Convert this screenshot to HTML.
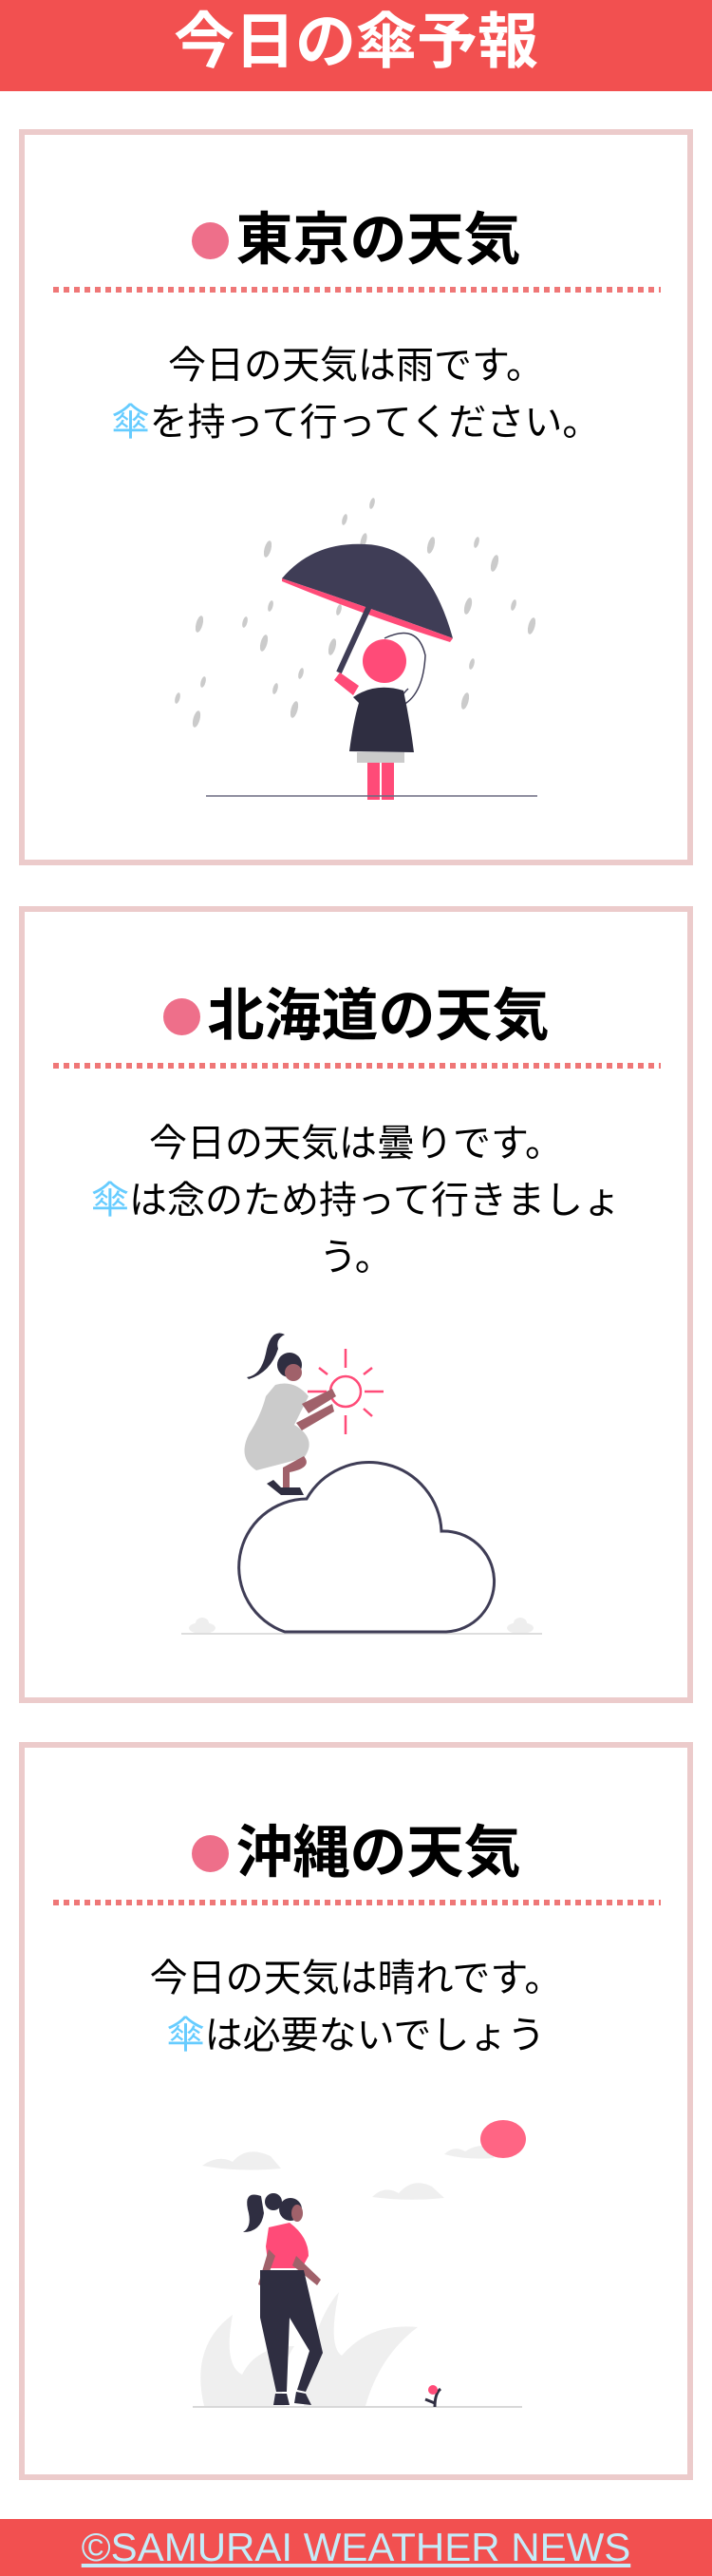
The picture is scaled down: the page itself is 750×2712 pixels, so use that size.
<!DOCTYPE html>
<html><head><meta charset="utf-8"><style>
*{margin:0;padding:0;box-sizing:border-box}
body{width:750px;height:2712px;position:relative;background:#fff;font-family:"Liberation Sans","Noto Sans CJK JP",sans-serif;overflow:hidden}
.hdr{position:absolute;left:0;top:0;width:750px;height:96px;background:#f25050;color:#fff;font-weight:bold;font-size:64px;line-height:88px;text-align:center}
.card{position:absolute;left:20px;width:710px;border:6px solid #eccbcb}
.title{position:absolute;left:0;width:750px;height:70px;line-height:70px;text-align:center;font-weight:bold;font-size:60px;color:#000;white-space:nowrap}
.dot{display:inline-block;width:39px;height:39px;border-radius:50%;background:#ee6f8a;vertical-align:middle;margin-right:8px;position:relative;top:-4px}
.line{position:absolute;left:56px;width:640px;height:6px;background:repeating-linear-gradient(90deg,#ef7777 0 6px,transparent 6px 11px)}
.txt{position:absolute;left:0;width:750px;text-align:center;font-size:40px;line-height:60px;color:#000;white-space:nowrap}
.u{color:#66ccff}
.ftr{position:absolute;left:0;top:2652px;width:750px;height:60px;background:#f25050;text-align:center;font-size:42px;line-height:60px;color:#c4ecf9;text-decoration:underline}
svg{position:absolute;left:0;top:0}
</style></head><body>
<div class="hdr">今日の傘予報</div>

<div class="card" style="top:136px;height:775px"></div>
<div class="title" style="top:218px"><span class="dot"></span>東京の天気</div>
<div class="line" style="top:302px"></div>
<div class="txt" style="top:355px">今日の天気は雨です。<br><span class="u">傘</span>を持って行ってください。</div>

<div class="card" style="top:954px;height:839px"></div>
<div class="title" style="top:1035px"><span class="dot"></span>北海道の天気</div>
<div class="line" style="top:1119px"></div>
<div class="txt" style="top:1174px">今日の天気は曇りです。<br><span class="u">傘</span>は念のため持って行きましょ<br>う。</div>

<div class="card" style="top:1834px;height:777px"></div>
<div class="title" style="top:1916px"><span class="dot"></span>沖縄の天気</div>
<div class="line" style="top:2000px"></div>
<div class="txt" style="top:2053px">今日の天気は晴れです。<br><span class="u">傘</span>は必要ないでしょう</div>

<div class="ftr">©SAMURAI WEATHER NEWS</div>

<svg width="750" height="2712" viewBox="0 0 750 2712">
<g fill="#cbcbcb">
<ellipse cx="282" cy="578" rx="3.5" ry="9" transform="rotate(15 282 578)"/>
<ellipse cx="363" cy="547" rx="2.5" ry="6" transform="rotate(15 363 547)"/>
<ellipse cx="392" cy="530" rx="2.5" ry="6" transform="rotate(15 392 530)"/>
<ellipse cx="383" cy="569" rx="3" ry="8" transform="rotate(15 383 569)"/>
<ellipse cx="454" cy="574" rx="3.5" ry="9" transform="rotate(15 454 574)"/>
<ellipse cx="502" cy="571" rx="2.5" ry="6" transform="rotate(15 502 571)"/>
<ellipse cx="521" cy="593" rx="3.5" ry="9" transform="rotate(15 521 593)"/>
<ellipse cx="493" cy="638" rx="3.5" ry="9" transform="rotate(15 493 638)"/>
<ellipse cx="541" cy="637" rx="2.5" ry="6" transform="rotate(15 541 637)"/>
<ellipse cx="560" cy="659" rx="3.5" ry="9" transform="rotate(15 560 659)"/>
<ellipse cx="210" cy="657" rx="3.5" ry="9" transform="rotate(15 210 657)"/>
<ellipse cx="258" cy="655" rx="2.5" ry="6" transform="rotate(15 258 655)"/>
<ellipse cx="285" cy="638" rx="2.5" ry="6" transform="rotate(15 285 638)"/>
<ellipse cx="357" cy="642" rx="2.5" ry="6" transform="rotate(15 357 642)"/>
<ellipse cx="278" cy="677" rx="3.5" ry="9" transform="rotate(15 278 677)"/>
<ellipse cx="350" cy="681" rx="3.5" ry="9" transform="rotate(15 350 681)"/>
<ellipse cx="497" cy="699" rx="2.5" ry="6" transform="rotate(15 497 699)"/>
<ellipse cx="214" cy="718" rx="2.5" ry="6" transform="rotate(15 214 718)"/>
<ellipse cx="187" cy="735" rx="2.5" ry="6" transform="rotate(15 187 735)"/>
<ellipse cx="317" cy="709" rx="2.5" ry="6" transform="rotate(15 317 709)"/>
<ellipse cx="290" cy="725" rx="2.5" ry="6" transform="rotate(15 290 725)"/>
<ellipse cx="310" cy="747" rx="3.5" ry="9" transform="rotate(15 310 747)"/>
<ellipse cx="207" cy="757" rx="3.5" ry="9" transform="rotate(15 207 757)"/>
<ellipse cx="490" cy="738" rx="3.5" ry="9" transform="rotate(15 490 738)"/>
</g>
<path d="M297 609 Q330 570 385 573 Q450 575 477 672 Q390 640 297 609Z" fill="#3f3d56"/>
<path d="M297 609 Q390 640 477 672 L474 676 Q390 650 297 612Z" fill="#ff4b78"/>
<line x1="390" y1="636" x2="357" y2="708" stroke="#3f3d56" stroke-width="6"/>
<path d="M358 708 L352 716 L372 732 L378 722Z" fill="#ff4b78"/>
<path d="M405 672 Q440 655 448 690 Q446 730 425 742 Q418 736 430 725" fill="none" stroke="#3f3d56" stroke-width="1.5"/>
<circle cx="405" cy="696" r="23" fill="#ff4b78"/>
<path d="M372 734 Q395 718 425 727 Q432 760 436 792 L368 791 Q372 760 378 740Z" fill="#2f2e41"/>
<rect x="376" y="792" width="50" height="11" fill="#cbcbcb"/>
<rect x="387" y="803" width="13" height="39" fill="#ff4b78"/>
<rect x="402" y="803" width="13" height="39" fill="#ff4b78"/>
<line x1="217" y1="838" x2="566" y2="838" stroke="#6c6a80" stroke-width="1.5"/>

<g fill="#eeeeee"><ellipse cx="213" cy="1714" rx="14" ry="6"/><ellipse cx="213" cy="1709" rx="7" ry="6"/><ellipse cx="548" cy="1714" rx="14" ry="6"/><ellipse cx="548" cy="1709" rx="7" ry="6"/></g>
<line x1="191" y1="1720" x2="571" y2="1720" stroke="#dddddd" stroke-width="2"/>
<path d="M300 1718 H470 A48 48 0 0 0 465 1612 A76 76 0 0 0 323 1578 A72 72 0 0 0 300 1718Z" fill="#fff" stroke="#3f3d56" stroke-width="3"/>
<g stroke="#ff4b78" stroke-width="2.5" fill="none">
<circle cx="364" cy="1465" r="16"/>
<line x1="364" y1="1420" x2="364" y2="1440"/><line x1="364" y1="1490" x2="364" y2="1510"/>
<line x1="324" y1="1465" x2="344" y2="1465"/><line x1="384" y1="1465" x2="404" y2="1465"/>
<line x1="336" y1="1440" x2="345" y2="1447"/><line x1="392" y1="1440" x2="383" y2="1447"/>
<line x1="383" y1="1483" x2="392" y2="1491"/>
</g>
<path d="M260 1450 Q275 1448 280 1425 Q285 1398 300 1405 Q290 1410 293 1420 Q285 1445 262 1452Z" fill="#2f2e41"/>
<circle cx="305" cy="1437" r="13" fill="#2f2e41"/>
<circle cx="309" cy="1445" r="9" fill="#a0616a"/>
<path d="M290 1458 Q310 1452 325 1470 L310 1500 Q335 1515 320 1535 L270 1548 Q250 1535 262 1510 Q275 1490 280 1470Z" fill="#cbcbcb"/>
<path d="M318 1478 L350 1462 L354 1470 L325 1488Z M312 1498 L350 1478 L352 1486 L318 1506Z" fill="#a0616a"/>
<path d="M320 1533 Q330 1545 305 1550 L305 1570 L298 1570 L298 1545Z" fill="#a0616a"/>
<path d="M281 1562 L296 1574 L320 1574 L316 1566 L296 1566 L288 1558Z" fill="#2f2e41"/>

<g fill="#efefef">
<path d="M213 2280 Q230 2268 245 2276 Q260 2258 285 2270 L296 2283 Q250 2287 213 2280Z"/>
<path d="M392 2313 Q405 2300 420 2309 Q435 2292 455 2302 L468 2314 Q430 2318 392 2313Z"/>
<path d="M468 2268 Q478 2258 490 2265 Q505 2255 520 2262 L520 2272 Q490 2274 468 2268Z"/>
<path d="M215 2533 Q200 2470 245 2437 Q235 2490 255 2500 Q270 2470 310 2470 Q290 2500 300 2533Z"/>
<path d="M320 2533 Q325 2450 357 2413 Q345 2470 360 2480 Q390 2445 440 2450 Q400 2480 385 2533Z"/>
</g>
<ellipse cx="530" cy="2252" rx="24" ry="20" fill="#ff6584"/>
<line x1="203" y1="2534" x2="550" y2="2534" stroke="#cccccc" stroke-width="1.5"/>
<path d="M458 2534 Q458 2520 464 2515 M458 2530 L448 2526" stroke="#2f2e41" stroke-width="3" fill="none"/>
<circle cx="456" cy="2516" r="5" fill="#ff4b78"/>
<path d="M275 2312 Q255 2305 262 2330 Q265 2345 256 2350 Q275 2350 278 2330Z" fill="#2f2e41"/>
<circle cx="288" cy="2318" r="9" fill="#2f2e41"/>
<circle cx="306" cy="2326" r="12" fill="#2f2e41"/>
<ellipse cx="313" cy="2330" rx="6" ry="9" fill="#a0616a"/>
<path d="M283 2345 L305 2340 Q325 2355 325 2375 L318 2388 L283 2388 L280 2365Z" fill="#ff4b78"/>
<path d="M283 2368 L272 2405 L278 2408 L290 2375Z M312 2375 L338 2400 L334 2406 L308 2385Z" fill="#a0616a"/>
<path d="M274 2390 L320 2390 L340 2477 L322 2518 L313 2516 L326 2475 L305 2440 L302 2518 L291 2518 L274 2440Z" fill="#2f2e41"/>
<path d="M290 2520 L302 2520 L305 2532 L288 2532Z M312 2518 L322 2520 L328 2532 L310 2530Z" fill="#2f2e41"/>
</svg>
</body></html>
